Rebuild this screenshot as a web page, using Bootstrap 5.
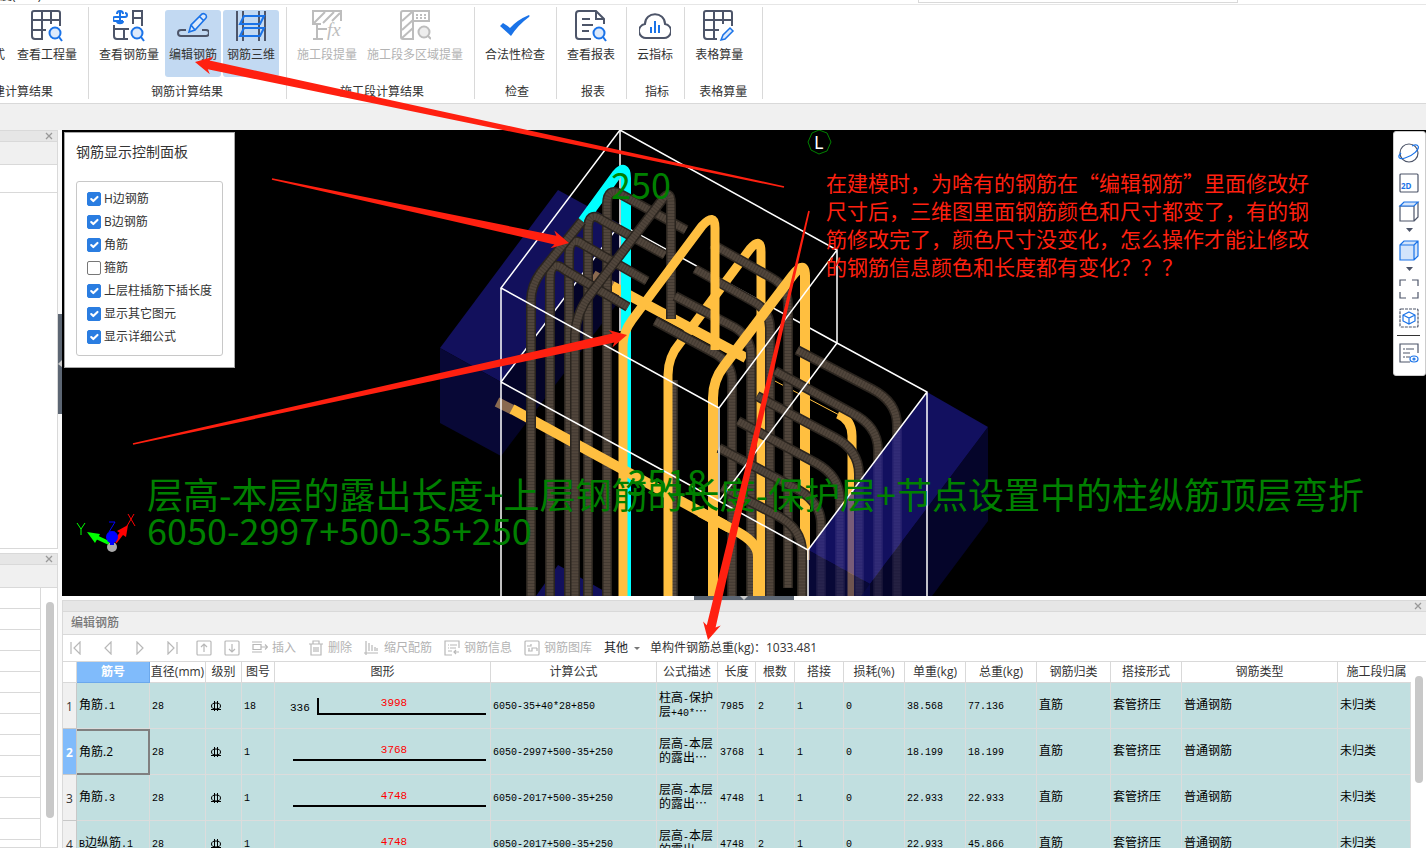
<!DOCTYPE html>
<html lang="zh-CN">
<head>
<meta charset="utf-8">
<meta name="viewport" content="width=device-width, initial-scale=1">
<title>编辑钢筋</title>
<link href="https://cdn.jsdelivr.net/npm/bootstrap@5.3.0/dist/css/bootstrap.min.css" rel="stylesheet">
<style>
:root{--line:#d9d9d9;--ink:#4d5569;--blue:#1a73e8;--mute:#b3b3b3}
body{font:12px/16px "Open Sans","Noto Sans CJK SC",sans-serif;color:#333;background:#fff;height:100vh;overflow:hidden}
svg{display:block}
button{font:inherit;color:inherit}
.topstrip{height:5px;border-bottom:1px solid #e6e6e6;line-height:8px}
.topstrip .doc{margin-top:-8px}
.topstrip .search{width:320px;margin-right:188px;border:1px solid var(--line);border-top:0;height:3px}
.ribbon{height:99px;padding:2px 0 4px;border-bottom:1px solid var(--line);background:#fff}
.rgroup{padding:3px 7px 0 6px;border-right:1px solid var(--line)}
.rgroup>div:last-child{height:15px;line-height:16px}
.rgroup.first{width:89px;overflow:hidden}
.rgroup.last{padding-right:15px}
.rbtn{border:0;background:none;padding:0 4px;height:67px;border-radius:3px;white-space:nowrap;display:flex;flex-direction:column;align-items:center;flex:none}
.rbtn svg{width:32px;height:32px;margin-bottom:5px;fill:none;stroke:var(--ink);stroke-width:2}
.rbtn.on{background:#c2d9f2}
.rbtn:disabled{color:var(--mute)}
.rbtn:disabled svg{stroke:#bdbdbd}
.b{stroke:var(--blue)}
.band{height:26px;background:#f0f0f0}
.side{width:58px}
.pane{border-right:1px solid var(--line);border-bottom:1px solid var(--line);background:#fff}
.phead{height:12px;background:#e6e6e6;border-top:1px solid var(--line);border-bottom:1px solid var(--line)}
.xbtn{border:0;background:none;padding:0;width:16px;height:10px}
.xbtn svg{stroke:#999;stroke-width:1.3;margin:auto}
.pstrip{height:23px;background:#f0f0f0;border-bottom:1px solid var(--line)}
.ptitle{color:#777;font-weight:500}
.gridlines{border-right:1px solid var(--line);background:repeating-linear-gradient(#fff 0 20px,var(--line) 20px 21px);width:41px}
.thumb{width:8px;border-radius:4px;background:#c8c8c8}
.vsplit{width:4px;background:#fafafa}
.vsplit div{height:100px;background:#5c6673}
.hsplit{height:4px;background:#fff}
.hsplit div{width:100px;height:4px;background:#5c6673}
.view{height:466px;background:#000;position:relative;overflow:hidden}
.scene{width:100%;height:466px}
.dim{font:400 36px "Noto Sans CJK SC",sans-serif;fill:#008000}
.ctl{position:absolute;left:2px;top:2px;width:171px;background:#fff;border:1px solid #a8a8a8;padding:9px 11px 11px}
.ctl h2{font-size:14px;line-height:20px;margin:0 0 19px;font-weight:400}
.ctl fieldset{border:1px solid #c8c8c8;border-radius:3px;padding:5px 10px 7px}
.ctl .form-check{padding:0;margin:0;min-height:23px;display:flex;align-items:center;gap:3px}
.ctl .form-check-input{float:none;margin:0;width:14px;height:14px;border:1px solid #777;border-radius:2px;flex:none}
.ctl .form-check-input:checked{background-color:#2a7de1;border-color:#2a7de1;background-size:14px}
.dock{position:absolute;right:0;top:1px;width:33px;height:245px;background:#fff;border:1px solid #ccc;border-radius:3px;padding:10px 2px 10px 0}
.dock button{border:0;background:none;padding:0;height:22px;width:22px}
.dock svg{fill:none;stroke:var(--ink);stroke-width:1.2}
.dock button.tri{height:8px;margin:4px 0 5px}
.dock hr{width:23px;margin:6px 0;border-color:#333;opacity:1}
.question{position:absolute;left:764px;top:38px;width:500px;font:400 21px/28px "Noto Sans CJK SC",sans-serif;color:#ff2010;margin:0}
.edit{border-left:1px solid var(--line)}
.tools{height:27px;border-bottom:1px solid var(--line)}
.tools button{border:0;background:none;padding:0;color:var(--mute);display:flex;align-items:center;gap:4px}
.tools svg{fill:none;stroke:#b8b8b8;stroke-width:1.2}
.tools .nav-b{width:26px;justify-content:center}
.rebars{table-layout:fixed;width:100%;border-collapse:separate;border-spacing:0;white-space:nowrap}
.rebars th{height:21px;padding:0;text-align:center;font-weight:400;border-right:1px solid var(--line);border-bottom:1px solid var(--line);line-height:16px}
.rebars thead th.cur{background:#80bbfb;color:#fff;font-weight:700;border-color:#6ba8ec}
.rebars tbody th{background:#f0f0f0;border-color:#c8c8c8;padding-top:3px}
.rebars tbody th.cur{background:#80bbfb;color:#fff;font-weight:700}
.rebars td{height:46px;padding:0 0 4px 2px;background:#c1dfe0;border-right:1px solid #dcdcdc;border-bottom:1px solid #dcdcdc;color:#000;overflow:hidden;font-family:"Noto Sans CJK SC",sans-serif;line-height:14px}
.rebars td.pic{padding-bottom:0}
.rebars td.desc{padding-bottom:3px}
.rebars td.sel{border:2px solid #808080;border-left:0;padding-bottom:0;font-family:"Open Sans","Noto Sans CJK SC",sans-serif}
.m{font:10px/1 "Liberation Mono",monospace;line-height:0}
.fig{font:11px "Liberation Mono",monospace}
.vbar{width:15px;padding:14px 4px 0}
.ink{position:absolute;left:0;top:0;width:1426px;height:848px;pointer-events:none;fill:#ff2010}
</style>
</head>
<body class="d-flex flex-column">
<div class="topstrip d-flex justify-content-between overflow-hidden flex-shrink-0"><span class="doc">度(mm)</span><span class="search"></span></div>

<nav class="ribbon d-flex flex-shrink-0">
  <div class="rgroup first d-flex flex-column justify-content-between">
    <div class="d-flex justify-content-end gap-1">
      <button class="rbtn" type="button"><svg viewBox="0 0 32 32"></svg>查看计算式</button>
      <button class="rbtn" type="button"><svg viewBox="1 1 32 32"><path d="M13 30H5a3 3 0 0 1-3-3V4a2 2 0 0 1 2-2h24a2 2 0 0 1 2 2v13M2 11h28M2 21h14M12 2v28M21 2v13"/><circle class="b" cx="25" cy="24" r="5.500" fill="#dce9fb"/><path class="b" d="M29 28l3 4"/></svg>查看工程量</button>
    </div>
    <div class="text-end pe-4 text-nowrap d-flex justify-content-end"><span class="me-1">土建计算结果</span></div>
  </div>
  <div class="rgroup d-flex flex-column justify-content-between">
    <div class="d-flex" style="gap:2px">
      <button class="rbtn" type="button"><svg viewBox="1 1 32 32"><path d="M21 15V2h9v15M21 9h9M2 16v11a3 3 0 0 0 3 3h11M2 20h15M12 20v10"/><path class="b" d="M8 8h5a2 2 0 0 0 0-4M8 2v12M8 8H3a2 2 0 0 0 0 4h8M5 5c0-4 6-4 6 0M5 12c0 3 6 3 6 0"/><circle class="b" cx="25" cy="24" r="5.500" fill="#dce9fb"/><path class="b" d="M29 28l3 4"/></svg>查看钢筋量</button>
      <button class="rbtn on" type="button"><svg viewBox="0 0 32 32"><path d="M9 20H4c-4 0-4 6 0 6h25c4 0 4-6 0-6h-4"/><path class="b" stroke-width="1.600" d="M12 22l2-7L25 4q2-1 4 1 1 2 0 3L18 20zM14 15l4 5M23 7l4 4" fill="#dce9fb"/></svg>编辑钢筋</button>
      <button class="rbtn on" type="button"><svg viewBox="0 0 32 32"><path d="M2 1v30M8 1v30M24 1v30M30 1v30"/><path class="b" d="M9 6h20l-4 8H5zM9 18h20l-4 8H5z"/></svg>钢筋三维</button>
    </div>
    <div class="text-center">钢筋计算结果</div>
  </div>
  <div class="rgroup d-flex flex-column justify-content-between">
    <div class="d-flex" style="gap:2px">
      <button class="rbtn" type="button" disabled><svg viewBox="0 1 32 32"><path d="M10 15H2V2h28v10M3 14L14 3M12 14L23 3M21 12l8-8M6 15v15M6 20h10M2 30h10"/><text x="16" y="27" font-family="Liberation Serif" font-style="italic" font-size="19" fill="#bdbdbd" stroke="none">fx</text></svg>施工段提量</button>
      <button class="rbtn" type="button" disabled><svg viewBox="0 1 32 32"><path d="M14 12V2H4a2 2 0 0 0-2 2v24a2 2 0 0 0 2 2h10V12zM3 12L13 3M3 21l11-10M3 29l11-10M14 2h16v10H14"/><path stroke-dasharray="2 2" d="M17 6h12M17 9h12"/><circle cx="25" cy="23" r="5.500" fill="#eee"/><path d="M29 27l3 3"/></svg>施工段多区域提量</button>
    </div>
    <div class="text-center ps-1">施工段计算结果</div>
  </div>
  <div class="rgroup d-flex flex-column justify-content-between">
    <button class="rbtn" type="button"><svg viewBox="0 0 32 32"><path d="M1 16l3-3q5 3 7 5Q18 10 30 5q1 1 0 2Q19 15 12 26z" fill="#1a73e8" stroke="none"/></svg>合法性检查</button>
    <div class="text-center ps-1">检查</div>
  </div>
  <div class="rgroup d-flex flex-column justify-content-between">
    <button class="rbtn" type="button"><svg viewBox="1 1 32 32"><path d="M17 30H5a3 3 0 0 1-3-3V5a3 3 0 0 1 3-3h17l8 8v5M22 2v8h8M8 10h8M8 16h11M8 22h7"/><circle class="b" cx="25" cy="24" r="5.500" fill="#dce9fb"/><path class="b" d="M29 28l3 4"/></svg>查看报表</button>
    <div class="text-center ps-1">报表</div>
  </div>
  <div class="rgroup d-flex flex-column justify-content-between">
    <button class="rbtn align-self-center" type="button"><svg viewBox="0 0 32 32"><path d="M8 28a7 7 0 0 1-2-14C6 1 26 1 26 14a7 7 0 0 1-2 14z"/><path class="b" d="M12 17v6M16 11v12M20 15v8"/></svg>云指标</button>
    <div class="text-center ps-1">指标</div>
  </div>
  <div class="rgroup last d-flex flex-column justify-content-between">
    <button class="rbtn" type="button"><svg viewBox="1 1 32 32"><path d="M15 30H5a3 3 0 0 1-3-3V4a2 2 0 0 1 2-2h24a2 2 0 0 1 2 2v13M2 11h28M2 21h15M12 2v28M21 2v13"/><path class="b" stroke-width="1.500" d="M19 31l2-5 7-7 3 3-8 8z" fill="#dce9fb"/></svg>表格算量</button>
    <div class="text-end">表格算量</div>
  </div>
</nav>
<div class="band flex-shrink-0"></div>

<div class="d-flex flex-grow-1 overflow-hidden">
  <aside class="side d-flex flex-column flex-shrink-0">
    <section class="pane" style="height:419px">
      <div class="phead d-flex justify-content-end"><button class="xbtn" type="button" aria-label="关闭"><svg width="8" height="8"><path d="M1 1l6 6M7 1L1 7"/></svg></button></div>
      <div class="pstrip"></div><div class="pstrip bg-white" style="height:28px"></div>
    </section>
    <section class="pane d-flex flex-column flex-grow-1 mt-1 overflow-hidden">
      <div class="phead d-flex justify-content-end flex-shrink-0"><button class="xbtn" type="button" aria-label="关闭"><svg width="8" height="8"><path d="M1 1l6 6M7 1L1 7"/></svg></button></div>
      <div class="pstrip flex-shrink-0"></div>
      <div class="d-flex flex-grow-1"><div class="gridlines"></div><div class="thumb" style="height:216px;margin:14px 0 0 5px"></div></div>
    </section>
  </aside>
  <div class="vsplit flex-shrink-0" style="padding-top:184px"><div class="d-flex align-items-center"><svg width="4" height="8"><path d="M4 0v7L0 4z" fill="#ccc"/></svg></div></div>

  <main class="d-flex flex-column flex-grow-1 overflow-hidden">
    <div class="view flex-shrink-0">
      <svg class="scene" viewBox="62 130 1364 466" preserveAspectRatio="xMinYMin slice" id="scene" fill="none"></svg>
      <form class="ctl">
        <h2>钢筋显示控制面板</h2>
        <fieldset>
          <div class="form-check"><input class="form-check-input" type="checkbox" id="c1" checked><label for="c1">H边钢筋</label></div>
          <div class="form-check"><input class="form-check-input" type="checkbox" id="c2" checked><label for="c2">B边钢筋</label></div>
          <div class="form-check"><input class="form-check-input" type="checkbox" id="c3" checked><label for="c3">角筋</label></div>
          <div class="form-check"><input class="form-check-input" type="checkbox" id="c4"><label for="c4">箍筋</label></div>
          <div class="form-check"><input class="form-check-input" type="checkbox" id="c5" checked><label for="c5">上层柱插筋下插长度</label></div>
          <div class="form-check"><input class="form-check-input" type="checkbox" id="c6" checked><label for="c6">显示其它图元</label></div>
          <div class="form-check"><input class="form-check-input" type="checkbox" id="c7" checked><label for="c7">显示详细公式</label></div>
        </fieldset>
      </form>
      <p class="question">在建模时，为啥有的钢筋在“编辑钢筋”里面修改好<br>尺寸后，三维图里面钢筋颜色和尺寸都变了，有的钢<br>筋修改完了，颜色尺寸没变化，怎么操作才能让修改<br>的钢筋信息颜色和长度都有变化？？？</p>
      <div class="dock d-flex flex-column align-items-center">
        <button type="button" aria-label="动态观察"><svg width="22" height="22"><circle cx="11" cy="11" r="9"/><path class="b" d="M3 11c-4 4-2 7 4 5 8-2 15-9 13-12-1-2-4-1-6 0"/></svg></button>
        <button type="button" aria-label="二维" style="margin:8px 0 6px"><svg width="22" height="22"><rect x="2" y="2" width="18" height="18" rx="1"/><text x="3" y="17" font-family="Open Sans" font-size="8" font-weight="700" fill="#1a73e8" stroke="none">2D</text></svg></button>
        <button type="button" aria-label="线框"><svg width="22" height="22"><path d="M2 6h14v15H2zM20 2v15l-4 4"/><path class="b" d="M2 6l4-4h14l-4 4z" fill="#d3e4fb"/></svg></button>
        <button class="tri" type="button" aria-label="更多"><svg width="22" height="8"><path d="M8 2h7l-3.500 4z" fill="#4d5569" stroke="none"/></svg></button>
        <button type="button" aria-label="实体"><svg width="22" height="22"><path class="b" fill="#d3e4fb" d="M2 6l4-4h14v15l-4 4H2zM2 6h14v15M16 6l4-4"/></svg></button>
        <button class="tri" type="button" aria-label="更多"><svg width="22" height="8"><path d="M8 2h7l-3.500 4z" fill="#4d5569" stroke="none"/></svg></button>
        <button type="button" aria-label="全屏"><svg width="22" height="22"><path d="M2 8V2h6M14 2h6v6M20 14v6h-6M8 20H2v-6"/></svg></button>
        <button type="button" aria-label="局部三维" style="margin-top:7px"><svg width="22" height="22"><rect x="2" y="2" width="18" height="18" rx="1" stroke-dasharray="3 1"/><path class="b" d="M11 5l6 3v6l-6 3-6-3V8zM5 8l6 3 6-3M11 11v6"/></svg></button>
        <hr>
        <button type="button" aria-label="显示设置"><svg width="22" height="22"><path d="M12 20H2V2h18v9M5 7h2M8 7h8M5 11h7M5 15h2M8 15h4"/><ellipse class="b" cx="16" cy="17" rx="4" ry="3"/><circle class="b" cx="16" cy="17" r="1"/></svg></button>
      </div>
    </div>
    <div class="hsplit flex-shrink-0 d-flex justify-content-center"><div><svg class="mx-auto" width="8" height="4"><path d="M0 0h8L4 4z" fill="#ccc"/></svg></div></div>
    <section class="edit d-flex flex-column flex-grow-1 overflow-hidden">
      <div class="phead flex-shrink-0 d-flex justify-content-end"><button class="xbtn" type="button" aria-label="关闭"><svg width="8" height="8"><path d="M1 1l6 6M7 1L1 7"/></svg></button></div>
      <div class="pstrip ptitle ps-2 flex-shrink-0 d-flex align-items-center">编辑钢筋</div>
      <div class="tools d-flex align-items-center flex-shrink-0">
        <div class="d-flex" style="gap:6px">
          <button class="nav-b" type="button" aria-label="第一条"><svg width="14" height="14"><path d="M2 1v12M11 1v12L5 7z"/></svg></button>
          <button class="nav-b" type="button" aria-label="上一条"><svg width="14" height="14"><path d="M10 1v12L4 7z"/></svg></button>
          <button class="nav-b" type="button" aria-label="下一条"><svg width="14" height="14"><path d="M4 1v12l6-6z"/></svg></button>
          <button class="nav-b" type="button" aria-label="最后一条"><svg width="14" height="14"><path d="M12 1v12M3 1v12l6-6z"/></svg></button>
        </div>
        <div class="d-flex align-items-center" style="gap:12px;margin-left:11px">
          <button type="button" aria-label="上移"><svg width="16" height="16"><rect x="1" y="1" width="14" height="14" rx="1"/><path d="M8 12V4M5 7l3-3 3 3"/></svg></button>
          <button type="button" aria-label="下移"><svg width="16" height="16"><rect x="1" y="1" width="14" height="14" rx="1"/><path d="M8 4v8M5 9l3 3 3-3"/></svg></button>
          <button type="button"><svg width="16" height="16"><path d="M0 2h10M0 12h10M1 4.500h8v5H1zM9 7h6M13 4.500L15.500 7 13 9.500"/></svg>插入</button>
          <button type="button"><svg width="16" height="16"><path d="M1 4h14M5 4V1h6v3M3 4v11h10V4M6 7v5M8 7v5M10 7v5"/></svg>删除</button>
          <button type="button"><svg width="16" height="16"><path d="M2 1v14M0 13h14M5 3v8M8 5v6M11 7v4M13 8v3"/></svg>缩尺配筋</button>
          <button type="button"><svg width="16" height="16"><path d="M8 15H1V1h14v7M4 5h1M6 5h7M4 8h1M6 8h6M4 11h4M10 12h5M12 10l-2 2 2 2"/></svg>钢筋信息</button>
          <button type="button"><svg width="16" height="16"><rect x="1" y="1" width="14" height="14" rx="1"/><path d="M3 6h4V4M4 11h4V8h5M5 8v3M13 8v3"/></svg>钢筋图库</button>
          <button type="button" class="text-dark">其他<svg width="10" height="8"><path d="M2 3h6L5 6z" fill="#777" stroke="none"/></svg></button>
        </div>
        <span class="ms-2">单构件钢筋总重(kg)：1033.481</span>
      </div>
      <div class="d-flex flex-grow-1 overflow-hidden">
        <div class="flex-grow-1 overflow-hidden">
          <table class="rebars">
            <colgroup id="cols"></colgroup>
            <thead><tr><th></th><th class="cur">筋号</th><th>直径(mm)</th><th>级别</th><th>图号</th><th>图形</th><th>计算公式</th><th>公式描述</th><th>长度</th><th>根数</th><th>搭接</th><th>损耗(%)</th><th>单重(kg)</th><th>总重(kg)</th><th>钢筋归类</th><th>搭接形式</th><th>钢筋类型</th><th class="border-end-0 ps-1">施工段归属</th></tr></thead>
            <tbody id="rows"></tbody>
          </table>
        </div>
        <div class="vbar flex-shrink-0"><div class="thumb" style="height:107px"></div></div>
      </div>
    </section>
  </main>
</div>
<svg class="ink" viewBox="0 0 1426 848" id="ink" aria-hidden="true"></svg>

<script>
// Table columns and rows
document.getElementById('cols').innerHTML =
  [14,73,56,36,33,216,166,61,38,39,49,61,61,71,74,71,156,73].map(w => `<col style="width:${w}px">`).join('');
const m = t => `<span class="m">${t}</span>`;
const rows = [
  ['角筋'+m('.1'),'18','3998','6050-35+40*28+850','柱高'+m('-')+'保护<br>层'+m('+40*')+'⋯','7985','2','38.568','77.136'],
  ['角筋.2','1','3768','6050-2997+500-35+250','层高'+m('-')+'本层<br>的露出⋯','3768','1','18.199','18.199'],
  ['角筋'+m('.3'),'1','4748','6050-2017+500-35+250','层高'+m('-')+'本层<br>的露出⋯','4748','1','22.933','22.933'],
  [m('B')+'边纵筋'+m('.1'),'1','4748','6050-2017+500-35+250','层高'+m('-')+'本层<br>的露出⋯','4748','2','22.933','45.866']];
const grade = '<svg width="12" height="12" style="margin:5px 0 0 2px" fill="none" stroke="#000"><ellipse cx="6" cy="6" rx="4.500" ry="3"/><path d="M4.500 1v10M7.500 1v10M1 9.500h10"/></svg>';
document.getElementById('rows').innerHTML = rows.map((r, i) => {
  const bent = i === 0;
  const pic = `<svg width="213" height="45" class="fig"><g stroke="#000" stroke-width="2" fill="none"><path d="${bent ? 'M41 15v16h168' : 'M16 31h193'}"/></g>` +
    (bent ? '<text x="13" y="28">336</text>' : '') + `<text x="117" y="${bent ? 23 : 24}" text-anchor="middle" fill="#f00">${r[2]}</text></svg>`;
  return `<tr><th class="${i === 1 ? 'cur' : ''}">${i+1}</th><td class="${i === 1 ? 'sel' : ''}">${r[0]}</td><td>${m(28)}</td><td>${grade}</td><td>${m(r[1])}</td><td class="pic">${pic}</td><td>${m(r[3])}</td><td class="desc">${r[4]}</td><td>${m(r[5])}</td><td>${m(r[6])}</td><td>${m(1)}</td><td>${m(0)}</td><td>${m(r[7])}</td><td>${m(r[8])}</td><td>直筋</td><td>套管挤压</td><td>普通钢筋</td><td>未归类</td></tr>`;
}).join('');

// 3D view of the column cage
const ribbed = d => `<path d="${d}" stroke="#2b251f" stroke-width="10"/><path d="${d}" stroke="#51463c" stroke-width="7"/><path d="${d}" stroke="#2b251f" stroke-opacity=".35" stroke-width="8" stroke-dasharray="1 2"/>`;
const bar = (d, c = '#ffbf40', w = 9) => `<path d="${d}" stroke="${c}" stroke-width="${w}" stroke-linejoin="round"/>`;
const wire = d => `<path d="${d}" stroke="#fff" stroke-width="1.500"/>`;
const face = (p, c, o = 1) => `<polygon points="${p}" fill="${c}" fill-opacity="${o}"/>`;
document.getElementById('scene').innerHTML =
  face('558,190 620,224 501,382 440,348', '#12105c') + face('440,348 501,382 501,456 440,423', '#080836') +
  face('501,382 620,224 620,300 501,456', '#040428') + face('558,565 536,596 613,596', '#12105c') +
  wire('M501 382L620 224L837 343M620 130V331') +
  bar('M593 275L612 286', '#8a6a50', 10) + bar('M612 286L746 358', '#ffbf40', 10) +
  bar('M773 380L843 417', '#ffbf40', 1) + bar('M838 414Q852 420 852 436V596') +
  bar('M582 222L617 174Q626 164 626 178V596', '#00ffff', 10) +
  ['M607 596V205Q607 186 622 195L686 230','M588 596V230Q588 210 602 220L665 255','M569 596V256Q569 234 584 245L647 281','M550 596V280Q550 258 565 270L628 307'].map(ribbed).join('') +
  bar('M497 402L513 410', '#8a6a50', 10) + bar('M512 409L730 528', '#ffbf40', 10) +
  ['M531 596V300Q531 286 541 272L582 221','M671 319V204Q671 188 662 200L592 292Q576 312 575 335V596'].map(ribbed).join('') +
  ribbed('M673 380V596') +
  bar('M668 596V375Q668 357 680 343L750 249Q761 236 761 252V596') +
  ['M712 244L772 278Q788 287 788 305V588','M695 269L754 302Q770 311 770 328V596','M675 296L734 327Q751 337 751 355V596','M655 321L716 354Q732 364 732 380V596'].map(ribbed).join('') +
  bar('M700 512L730 528Q758 541 758 556V596', '#ffbf40', 10) +
  bar('M623 596V345Q623 332 632 320L702 226Q715 212 715 228V350') +
  bar('M805 560V276Q805 260 793 275L724 366Q713 380 713 398V596', '#ffbf40', 10) +
  ['M797 350L872 389Q897 402 897 425V596','M775 371L852 413Q878 426 878 450V596','M757 396L834 437Q859 450 859 474V596','M738 421L816 463Q840 476 840 500V596','M719 448L797 489Q821 502 821 524V596','M722 487L778 516Q802 529 802 552V596'].map(ribbed).join('') +
  face('927,392 988,427 870,584 808,550', '#1e1b9e', .6) + face('988,427 988,521 932,596 861,596', '#080846', .6) +
  face('808,550 870,584 870,596 808,596', '#0d0d5a', .6) +
  wire('M620 130L837 250L719 408L501 288ZM501 288V596M719 408V501M837 250V343M501 382L719 501L808 550V596M719 501L837 343L927 392V596M808 550L927 392') +
  '<text class="dim" x="611" y="199">250</text><text class="dim" x="627" y="496">3518</text>' +
  '<text class="dim" x="147" y="509">层高-本层的露出长度+上层钢筋的长度-保护层+节点设置中的柱纵筋顶层弯折</text>' +
  '<text class="dim" x="147" y="545">6050-2997+500-35+250</text>' +
  '<path d="M812 133L819 130 827 133 831 142 827 151 819 154 811 150 808 142Z" stroke="#008000"/><text x="814" y="149" font-family="Noto Sans" font-size="18" fill="#fff">L</text>' +
  '<circle cx="112" cy="547" r="5" fill="#aaa"/><path d="M109 543L96 537" stroke="#0f0" stroke-width="4"/><path d="M87 532L100 534 95 543Z" fill="#0f0"/>' +
  '<path d="M115 542L122 533" stroke="#f00" stroke-width="4"/><path d="M128 525L126 537 117 531Z" fill="#f00"/><circle cx="112" cy="537" r="6" fill="#00f"/><path d="M112 538V545" stroke="#00f" stroke-width="4"/>' +
  '<g stroke-width="1"><path d="M77 523L81 529 85 523M81 529V535" stroke="#0f0"/><path d="M128 514L135 526M134 514L127 526" stroke="#f00"/><path d="M109 522H115L109 532H115" stroke="#00f"/></g>';

// Tapered annotation arrows: tail point to tip point
const arrow = (x0, y0, x1, y1) => {
  const L = Math.hypot(x1 - x0, y1 - y0), ux = (x1 - x0) / L, uy = (y1 - y0) / L;
  const p = (back, side) => `${(x1 - ux * back - uy * side).toFixed(1)},${(y1 - uy * back + ux * side).toFixed(1)}`;
  return `<polygon points="${[p(0,0), p(17,9), p(14,4.5), p(L,.8), p(L,-.8), p(14,-4.5), p(17,-9)].join(' ')}"/>`;
};
document.getElementById('ink').innerHTML = arrow(784,187,195,62) + arrow(272,179,569,243) + arrow(133,444,627,335) + arrow(809,211,708,640);
</script>
<script src="https://cdn.jsdelivr.net/npm/bootstrap@5.3.0/dist/js/bootstrap.bundle.min.js"></script>
</body>
</html>
